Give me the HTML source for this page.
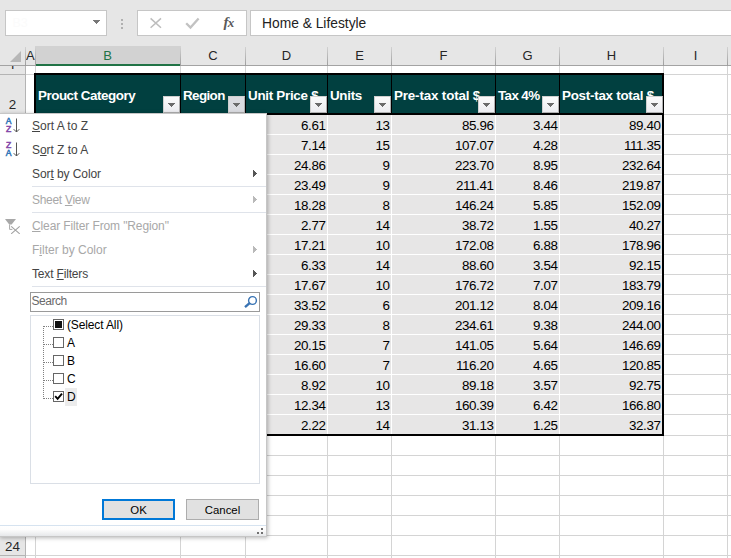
<!DOCTYPE html>
<html><head><meta charset="utf-8"><title>Sheet</title>
<style>
html,body{margin:0;padding:0;}
body{width:731px;height:558px;overflow:hidden;position:relative;background:#fff;font-family:"Liberation Sans",sans-serif;}
.abs{position:absolute;}
#top{left:0;top:0;width:731px;height:66px;background:#e6e6e6;}
.box{position:absolute;background:#fff;border:1px solid #c6c6c6;box-sizing:border-box;}
.ch{position:absolute;top:46px;height:19px;line-height:19px;text-align:center;font-size:13px;color:#262626;}
.vs{position:absolute;top:47px;width:1px;height:19px;background:linear-gradient(#d2d2d2,#9c9c9c);}
.gv{position:absolute;width:1px;background:#d4d4d4;top:66px;height:492px;}
.gh{position:absolute;height:1px;background:#d4d4d4;left:26px;width:705px;}
.rh{position:absolute;left:0;width:25px;background:#e6e6e6;text-align:center;font-size:13.4px;color:#262626;}
.hd{position:absolute;top:75px;height:38px;background:#014040;color:#fff;font-weight:bold;font-size:13.4px;letter-spacing:-0.45px;line-height:42px;white-space:nowrap;overflow:hidden;box-sizing:border-box;padding-left:2px;}
.fb{position:absolute;top:96px;width:17px;height:17px;box-sizing:border-box;background:linear-gradient(#fbfbfb,#ececf0);border:1px solid #b0b0b0;border-top-color:#cfcfcf;border-left-color:#cfcfcf;}
.fb i{position:absolute;left:4px;top:6px;width:0;height:0;border-left:3.5px solid transparent;border-right:3.5px solid transparent;border-top:4px solid #6b6b6b;}
.dc{position:absolute;height:19px;background:#e7e6e6;font-size:13.4px;line-height:21px;text-align:right;color:#000;box-sizing:border-box;padding-right:1.5px;letter-spacing:-0.4px;white-space:nowrap;}
#menu{position:absolute;left:-1px;top:113px;width:268px;height:424px;background:#fff;box-sizing:border-box;border:1px solid #c6c6c6;box-shadow:1px 1px 4px rgba(0,0,0,0.28);font-size:12px;color:#444;}
.mi{position:absolute;left:32px;height:24px;line-height:24px;white-space:nowrap;}
.mi.dis{color:#a8a8a8;}
.ms{position:absolute;left:32px;right:0;height:1px;background:#dfe3ea;}
.ar{position:absolute;left:254px;width:0;height:0;border-top:3.5px solid transparent;border-bottom:3.5px solid transparent;border-left:4px solid #555;}
.ar.dis{border-left-color:#b8b8b8;}
u{text-decoration:underline;text-underline-offset:1px;}
.cb{position:absolute;left:53px;width:11px;height:11px;box-sizing:border-box;border:1px solid #666;background:#fff;}
.cl{position:absolute;left:67px;height:18px;line-height:18px;color:#000;font-size:12px;}
.btn{position:absolute;top:385px;height:21px;width:73px;box-sizing:border-box;background:#e1e1e1;border:1px solid #adadad;text-align:center;line-height:20px;color:#000;font-size:11.4px;}
</style></head><body>

<div id="top" class="abs"></div>
<div class="box" style="left:5px;top:10px;width:102px;height:26px;"><span style="position:absolute;left:6.5px;top:5px;font-size:12.4px;color:#fbfbfb;">B3</span><svg width="7" height="4" viewBox="0 0 7 4" shape-rendering="crispEdges" style="position:absolute;left:87px;top:9px;"><path d="M0 0h7v1h-1v1h-1v1h-1v1h-1v-1h-1v-1h-1v-1h-1z" fill="#777"/></svg></div>
<div class="abs" style="left:121px;top:19px;width:2px;height:2px;background:#b0b0b0;"></div>
<div class="abs" style="left:121px;top:23px;width:2px;height:2px;background:#b0b0b0;"></div>
<div class="abs" style="left:121px;top:27px;width:2px;height:2px;background:#b0b0b0;"></div>
<div class="box" style="left:137px;top:10px;width:110px;height:26px;"><svg style="position:absolute;left:0;top:0" width="108" height="24" viewBox="0 0 108 24"><path d="M12.6 7.4 L23 16.8 M23 7.4 L12.6 16.8" stroke="#bdbdbd" stroke-width="1.5" fill="none"/><path d="M48.2 12.2 L52.5 16.6 L60.6 7.4" stroke="#c2c2c2" stroke-width="2.3" fill="none"/></svg><span style="position:absolute;left:85.5px;top:3px;font-family:'Liberation Serif',serif;font-style:italic;font-weight:bold;font-size:15px;color:#5a5a5a;letter-spacing:-0.8px;">f<span style="font-size:13px;">x</span></span></div>
<div class="box" style="left:250px;top:10px;width:490px;height:26px;border-right:none;"><span style="position:absolute;left:11px;top:5px;font-size:13.8px;color:#222;white-space:nowrap;">Home &amp; Lifestyle</span></div>
<div class="abs" style="left:0;top:65px;width:731px;height:1px;background:#a3a3a3;"></div>
<div class="abs" style="left:35px;top:46px;width:146px;height:18px;background:#d2d2d2;"></div>
<div class="abs" style="left:35px;top:64px;width:146px;height:2px;background:#217346;"></div>
<div class="ch" style="left:26px;width:8px;color:#262626;">A</div>
<div class="ch" style="left:35px;width:145px;color:#217346;">B</div>
<div class="ch" style="left:181px;width:64px;color:#262626;">C</div>
<div class="ch" style="left:246px;width:81px;color:#262626;">D</div>
<div class="ch" style="left:328px;width:63px;color:#262626;">E</div>
<div class="ch" style="left:392px;width:103px;color:#262626;">F</div>
<div class="ch" style="left:496px;width:63px;color:#262626;">G</div>
<div class="ch" style="left:560px;width:103px;color:#262626;">H</div>
<div class="ch" style="left:664px;width:63px;color:#262626;">I</div>
<div class="vs" style="left:25px;"></div>
<div class="vs" style="left:35px;"></div>
<div class="vs" style="left:180px;"></div>
<div class="vs" style="left:245px;"></div>
<div class="vs" style="left:327px;"></div>
<div class="vs" style="left:391px;"></div>
<div class="vs" style="left:495px;"></div>
<div class="vs" style="left:559px;"></div>
<div class="vs" style="left:663px;"></div>
<div class="vs" style="left:727px;"></div>
<svg class="abs" style="left:8px;top:50px" width="14" height="13"><path d="M13 1 L13 12 L2 12 Z" fill="#b7b7b7"/></svg>
<div class="gv" style="left:35px;"></div>
<div class="gv" style="left:180px;"></div>
<div class="gv" style="left:245px;"></div>
<div class="gv" style="left:327px;"></div>
<div class="gv" style="left:391px;"></div>
<div class="gv" style="left:495px;"></div>
<div class="gv" style="left:559px;"></div>
<div class="gv" style="left:663px;"></div>
<div class="gv" style="left:727px;"></div>
<div class="gh" style="top:74px;"></div>
<div class="gh" style="top:114px;"></div>
<div class="gh" style="top:134px;"></div>
<div class="gh" style="top:154px;"></div>
<div class="gh" style="top:174px;"></div>
<div class="gh" style="top:194px;"></div>
<div class="gh" style="top:214px;"></div>
<div class="gh" style="top:234px;"></div>
<div class="gh" style="top:254px;"></div>
<div class="gh" style="top:274px;"></div>
<div class="gh" style="top:294px;"></div>
<div class="gh" style="top:314px;"></div>
<div class="gh" style="top:334px;"></div>
<div class="gh" style="top:354px;"></div>
<div class="gh" style="top:374px;"></div>
<div class="gh" style="top:394px;"></div>
<div class="gh" style="top:414px;"></div>
<div class="gh" style="top:435px;"></div>
<div class="gh" style="top:455px;"></div>
<div class="gh" style="top:475px;"></div>
<div class="gh" style="top:495px;"></div>
<div class="gh" style="top:515px;"></div>
<div class="gh" style="top:535px;"></div>
<div class="gh" style="top:555px;"></div>
<div class="abs" style="left:0;top:66px;width:25px;height:492px;background:#e6e6e6;"></div>
<div class="abs" style="left:25px;top:66px;width:1px;height:492px;background:#b4b4b4;"></div>
<div class="abs" style="left:0;top:74px;width:25px;height:1px;background:#b4b4b4;"></div>
<div class="abs" style="left:0;top:114px;width:25px;height:1px;background:#b4b4b4;"></div>
<div class="abs" style="left:0;top:535px;width:25px;height:1px;background:#b4b4b4;"></div>
<div class="abs" style="left:0;top:555px;width:25px;height:1px;background:#b4b4b4;"></div>
<div class="rh" style="top:58px;height:16px;line-height:16px;overflow:hidden;clip-path:inset(8px 0 5px 0);">1</div>
<div class="rh" style="top:94px;height:20px;line-height:21px;">2</div>
<div class="rh" style="top:536px;height:19px;line-height:21px;">24</div>
<div class="abs" style="left:34px;top:73px;width:630px;height:363px;background:#000;"></div>
<div class="abs" style="left:36px;top:115px;width:626px;height:319px;background:#fff;"></div>
<div class="hd" style="left:36px;width:144px;letter-spacing:-0.47px;">Prouct Category</div>
<div class="fb" style="left:163px;background:linear-gradient(#fbfbfb,#ececf0);"><svg width="7" height="4" viewBox="0 0 7 4" shape-rendering="crispEdges" style="position:absolute;left:4px;top:6px;"><path d="M0 0h7v1h-1v1h-1v1h-1v1h-1v-1h-1v-1h-1v-1h-1z" fill="#6b6b6b"/></svg></div>
<div class="hd" style="left:181px;width:64px;letter-spacing:-0.61px;">Region</div>
<div class="fb" style="left:228px;background:#dadbe0;"><svg width="7" height="4" viewBox="0 0 7 4" shape-rendering="crispEdges" style="position:absolute;left:4px;top:6px;"><path d="M0 0h7v1h-1v1h-1v1h-1v1h-1v-1h-1v-1h-1v-1h-1z" fill="#6b6b6b"/></svg></div>
<div class="hd" style="left:246px;width:81px;letter-spacing:-0.28px;">Unit Price $</div>
<div class="fb" style="left:310px;background:linear-gradient(#fbfbfb,#ececf0);"><svg width="7" height="4" viewBox="0 0 7 4" shape-rendering="crispEdges" style="position:absolute;left:4px;top:6px;"><path d="M0 0h7v1h-1v1h-1v1h-1v1h-1v-1h-1v-1h-1v-1h-1z" fill="#6b6b6b"/></svg></div>
<div class="hd" style="left:328px;width:63px;letter-spacing:-0.3px;">Units</div>
<div class="fb" style="left:374px;background:linear-gradient(#fbfbfb,#ececf0);"><svg width="7" height="4" viewBox="0 0 7 4" shape-rendering="crispEdges" style="position:absolute;left:4px;top:6px;"><path d="M0 0h7v1h-1v1h-1v1h-1v1h-1v-1h-1v-1h-1v-1h-1z" fill="#6b6b6b"/></svg></div>
<div class="hd" style="left:392px;width:103px;letter-spacing:-0.16px;">Pre-tax total $</div>
<div class="fb" style="left:478px;background:linear-gradient(#fbfbfb,#ececf0);"><svg width="7" height="4" viewBox="0 0 7 4" shape-rendering="crispEdges" style="position:absolute;left:4px;top:6px;"><path d="M0 0h7v1h-1v1h-1v1h-1v1h-1v-1h-1v-1h-1v-1h-1z" fill="#6b6b6b"/></svg></div>
<div class="hd" style="left:496px;width:63px;letter-spacing:-0.62px;">Tax 4%</div>
<div class="fb" style="left:542px;background:linear-gradient(#fbfbfb,#ececf0);"><svg width="7" height="4" viewBox="0 0 7 4" shape-rendering="crispEdges" style="position:absolute;left:4px;top:6px;"><path d="M0 0h7v1h-1v1h-1v1h-1v1h-1v-1h-1v-1h-1v-1h-1z" fill="#6b6b6b"/></svg></div>
<div class="hd" style="left:560px;width:102px;letter-spacing:-0.26px;">Post-tax total $</div>
<div class="fb" style="left:646px;background:linear-gradient(#fbfbfb,#ececf0);"><svg width="7" height="4" viewBox="0 0 7 4" shape-rendering="crispEdges" style="position:absolute;left:4px;top:6px;"><path d="M0 0h7v1h-1v1h-1v1h-1v1h-1v-1h-1v-1h-1v-1h-1z" fill="#6b6b6b"/></svg></div>
<div class="dc" style="left:36px;top:115px;width:144px;"></div>
<div class="dc" style="left:181px;top:115px;width:64px;"></div>
<div class="dc" style="left:246px;top:115px;width:81px;">6.61</div>
<div class="dc" style="left:328px;top:115px;width:63px;">13</div>
<div class="dc" style="left:392px;top:115px;width:103px;">85.96</div>
<div class="dc" style="left:496px;top:115px;width:63px;">3.44</div>
<div class="dc" style="left:560px;top:115px;width:102px;">89.40</div>
<div class="dc" style="left:36px;top:135px;width:144px;"></div>
<div class="dc" style="left:181px;top:135px;width:64px;"></div>
<div class="dc" style="left:246px;top:135px;width:81px;">7.14</div>
<div class="dc" style="left:328px;top:135px;width:63px;">15</div>
<div class="dc" style="left:392px;top:135px;width:103px;">107.07</div>
<div class="dc" style="left:496px;top:135px;width:63px;">4.28</div>
<div class="dc" style="left:560px;top:135px;width:102px;">111.35</div>
<div class="dc" style="left:36px;top:155px;width:144px;"></div>
<div class="dc" style="left:181px;top:155px;width:64px;"></div>
<div class="dc" style="left:246px;top:155px;width:81px;">24.86</div>
<div class="dc" style="left:328px;top:155px;width:63px;">9</div>
<div class="dc" style="left:392px;top:155px;width:103px;">223.70</div>
<div class="dc" style="left:496px;top:155px;width:63px;">8.95</div>
<div class="dc" style="left:560px;top:155px;width:102px;">232.64</div>
<div class="dc" style="left:36px;top:175px;width:144px;"></div>
<div class="dc" style="left:181px;top:175px;width:64px;"></div>
<div class="dc" style="left:246px;top:175px;width:81px;">23.49</div>
<div class="dc" style="left:328px;top:175px;width:63px;">9</div>
<div class="dc" style="left:392px;top:175px;width:103px;">211.41</div>
<div class="dc" style="left:496px;top:175px;width:63px;">8.46</div>
<div class="dc" style="left:560px;top:175px;width:102px;">219.87</div>
<div class="dc" style="left:36px;top:195px;width:144px;"></div>
<div class="dc" style="left:181px;top:195px;width:64px;"></div>
<div class="dc" style="left:246px;top:195px;width:81px;">18.28</div>
<div class="dc" style="left:328px;top:195px;width:63px;">8</div>
<div class="dc" style="left:392px;top:195px;width:103px;">146.24</div>
<div class="dc" style="left:496px;top:195px;width:63px;">5.85</div>
<div class="dc" style="left:560px;top:195px;width:102px;">152.09</div>
<div class="dc" style="left:36px;top:215px;width:144px;"></div>
<div class="dc" style="left:181px;top:215px;width:64px;"></div>
<div class="dc" style="left:246px;top:215px;width:81px;">2.77</div>
<div class="dc" style="left:328px;top:215px;width:63px;">14</div>
<div class="dc" style="left:392px;top:215px;width:103px;">38.72</div>
<div class="dc" style="left:496px;top:215px;width:63px;">1.55</div>
<div class="dc" style="left:560px;top:215px;width:102px;">40.27</div>
<div class="dc" style="left:36px;top:235px;width:144px;"></div>
<div class="dc" style="left:181px;top:235px;width:64px;"></div>
<div class="dc" style="left:246px;top:235px;width:81px;">17.21</div>
<div class="dc" style="left:328px;top:235px;width:63px;">10</div>
<div class="dc" style="left:392px;top:235px;width:103px;">172.08</div>
<div class="dc" style="left:496px;top:235px;width:63px;">6.88</div>
<div class="dc" style="left:560px;top:235px;width:102px;">178.96</div>
<div class="dc" style="left:36px;top:255px;width:144px;"></div>
<div class="dc" style="left:181px;top:255px;width:64px;"></div>
<div class="dc" style="left:246px;top:255px;width:81px;">6.33</div>
<div class="dc" style="left:328px;top:255px;width:63px;">14</div>
<div class="dc" style="left:392px;top:255px;width:103px;">88.60</div>
<div class="dc" style="left:496px;top:255px;width:63px;">3.54</div>
<div class="dc" style="left:560px;top:255px;width:102px;">92.15</div>
<div class="dc" style="left:36px;top:275px;width:144px;"></div>
<div class="dc" style="left:181px;top:275px;width:64px;"></div>
<div class="dc" style="left:246px;top:275px;width:81px;">17.67</div>
<div class="dc" style="left:328px;top:275px;width:63px;">10</div>
<div class="dc" style="left:392px;top:275px;width:103px;">176.72</div>
<div class="dc" style="left:496px;top:275px;width:63px;">7.07</div>
<div class="dc" style="left:560px;top:275px;width:102px;">183.79</div>
<div class="dc" style="left:36px;top:295px;width:144px;"></div>
<div class="dc" style="left:181px;top:295px;width:64px;"></div>
<div class="dc" style="left:246px;top:295px;width:81px;">33.52</div>
<div class="dc" style="left:328px;top:295px;width:63px;">6</div>
<div class="dc" style="left:392px;top:295px;width:103px;">201.12</div>
<div class="dc" style="left:496px;top:295px;width:63px;">8.04</div>
<div class="dc" style="left:560px;top:295px;width:102px;">209.16</div>
<div class="dc" style="left:36px;top:315px;width:144px;"></div>
<div class="dc" style="left:181px;top:315px;width:64px;"></div>
<div class="dc" style="left:246px;top:315px;width:81px;">29.33</div>
<div class="dc" style="left:328px;top:315px;width:63px;">8</div>
<div class="dc" style="left:392px;top:315px;width:103px;">234.61</div>
<div class="dc" style="left:496px;top:315px;width:63px;">9.38</div>
<div class="dc" style="left:560px;top:315px;width:102px;">244.00</div>
<div class="dc" style="left:36px;top:335px;width:144px;"></div>
<div class="dc" style="left:181px;top:335px;width:64px;"></div>
<div class="dc" style="left:246px;top:335px;width:81px;">20.15</div>
<div class="dc" style="left:328px;top:335px;width:63px;">7</div>
<div class="dc" style="left:392px;top:335px;width:103px;">141.05</div>
<div class="dc" style="left:496px;top:335px;width:63px;">5.64</div>
<div class="dc" style="left:560px;top:335px;width:102px;">146.69</div>
<div class="dc" style="left:36px;top:355px;width:144px;"></div>
<div class="dc" style="left:181px;top:355px;width:64px;"></div>
<div class="dc" style="left:246px;top:355px;width:81px;">16.60</div>
<div class="dc" style="left:328px;top:355px;width:63px;">7</div>
<div class="dc" style="left:392px;top:355px;width:103px;">116.20</div>
<div class="dc" style="left:496px;top:355px;width:63px;">4.65</div>
<div class="dc" style="left:560px;top:355px;width:102px;">120.85</div>
<div class="dc" style="left:36px;top:375px;width:144px;"></div>
<div class="dc" style="left:181px;top:375px;width:64px;"></div>
<div class="dc" style="left:246px;top:375px;width:81px;">8.92</div>
<div class="dc" style="left:328px;top:375px;width:63px;">10</div>
<div class="dc" style="left:392px;top:375px;width:103px;">89.18</div>
<div class="dc" style="left:496px;top:375px;width:63px;">3.57</div>
<div class="dc" style="left:560px;top:375px;width:102px;">92.75</div>
<div class="dc" style="left:36px;top:395px;width:144px;"></div>
<div class="dc" style="left:181px;top:395px;width:64px;"></div>
<div class="dc" style="left:246px;top:395px;width:81px;">12.34</div>
<div class="dc" style="left:328px;top:395px;width:63px;">13</div>
<div class="dc" style="left:392px;top:395px;width:103px;">160.39</div>
<div class="dc" style="left:496px;top:395px;width:63px;">6.42</div>
<div class="dc" style="left:560px;top:395px;width:102px;">166.80</div>
<div class="dc" style="left:36px;top:415px;width:144px;"></div>
<div class="dc" style="left:181px;top:415px;width:64px;"></div>
<div class="dc" style="left:246px;top:415px;width:81px;">2.22</div>
<div class="dc" style="left:328px;top:415px;width:63px;">14</div>
<div class="dc" style="left:392px;top:415px;width:103px;">31.13</div>
<div class="dc" style="left:496px;top:415px;width:63px;">1.25</div>
<div class="dc" style="left:560px;top:415px;width:102px;">32.37</div>
<div id="menu">
<div class="mi" style="top:0px;letter-spacing:0px;"><u>S</u>ort A to Z</div>
<div class="mi" style="top:24px;letter-spacing:-0.05px;">S<u>o</u>rt Z to A</div>
<div class="mi" style="top:48px;letter-spacing:-0.08px;">Sor<u>t</u> by Color</div>
<svg width="4" height="7" viewBox="0 0 4 7" shape-rendering="crispEdges" style="position:absolute;left:253px;top:56px;"><path d="M0 0h1v1h1v1h1v1h1v1h-1v1h-1v1h-1v1h-1z" fill="#555"/></svg>
<div class="ms" style="top:72px;"></div>
<div class="mi dis" style="top:74px;letter-spacing:-0.3px;">Sheet <u>V</u>iew</div>
<svg width="4" height="7" viewBox="0 0 4 7" shape-rendering="crispEdges" style="position:absolute;left:253px;top:82px;"><path d="M0 0h1v1h1v1h1v1h1v1h-1v1h-1v1h-1v1h-1z" fill="#b9b9b9"/></svg>
<div class="ms" style="top:98px;"></div>
<div class="mi dis" style="top:100px;letter-spacing:-0.12px;"><u>C</u>lear Filter From "Region"</div>
<div class="mi dis" style="top:124px;letter-spacing:0px;">F<u>i</u>lter by Color</div>
<svg width="4" height="7" viewBox="0 0 4 7" shape-rendering="crispEdges" style="position:absolute;left:253px;top:132px;"><path d="M0 0h1v1h1v1h1v1h1v1h-1v1h-1v1h-1v1h-1z" fill="#b9b9b9"/></svg>
<div class="mi" style="top:148px;letter-spacing:-0.17px;">Text <u>F</u>ilters</div>
<svg width="4" height="7" viewBox="0 0 4 7" shape-rendering="crispEdges" style="position:absolute;left:253px;top:156px;"><path d="M0 0h1v1h1v1h1v1h1v1h-1v1h-1v1h-1v1h-1z" fill="#555"/></svg>
<div class="ms" style="top:172px;"></div>
<svg class="abs" style="left:5px;top:3px" width="18" height="42" viewBox="0 0 18 42"><text x="0.8" y="7.3" font-family="Liberation Sans,sans-serif" font-size="8.6" fill="#3576b8" stroke="#3576b8" stroke-width="0.5">A</text><text x="1.0" y="15.3" font-family="Liberation Sans,sans-serif" font-size="8.6" fill="#8346a8" stroke="#8346a8" stroke-width="0.5">Z</text><path d="M11.5 1.5 V15 M8.7 12.2 L11.5 15 L14.3 12.2" stroke="#555" stroke-width="1" fill="none"/><text x="1.0" y="30.7" font-family="Liberation Sans,sans-serif" font-size="8.6" fill="#8346a8" stroke="#8346a8" stroke-width="0.5">Z</text><text x="0.8" y="39.3" font-family="Liberation Sans,sans-serif" font-size="8.6" fill="#3576b8" stroke="#3576b8" stroke-width="0.5">A</text><path d="M11.5 25.5 V39 M8.7 36.2 L11.5 39 L14.3 36.2" stroke="#555" stroke-width="1" fill="none"/></svg>
<svg class="abs" style="left:4px;top:104px" width="18" height="16" viewBox="0 0 18 16"><path d="M1 1 H12 L7.6 6.6 H5.2 Z" fill="#a8a8a8"/><path d="M5.6 6.5 V11.4 H8.4" stroke="#a8a8a8" stroke-width="1" fill="none"/><path d="M7.2 8.4 L15.7 15.8 M15.7 8.4 L7.2 15.8" stroke="#a0a0a0" stroke-width="1.1" fill="none"/></svg>
<div class="abs" style="left:30px;top:178px;width:230px;height:20px;box-sizing:border-box;border:1px solid #9a9a9a;background:#fff;"><span style="position:absolute;left:0.5px;top:0px;line-height:16px;color:#6a6a6a;font-size:12px;letter-spacing:-0.45px;">Search</span><svg style="position:absolute;left:211px;top:1px" width="17" height="17" viewBox="0 0 17 17"><circle cx="10.5" cy="6.5" r="3.9" stroke="#3873b3" stroke-width="1.4" fill="none"/><path d="M7.6 9.2 L3.0 13.1" stroke="#3873b3" stroke-width="2.4"/></svg></div>
<div class="abs" style="left:30px;top:201px;width:230px;height:169px;box-sizing:border-box;border:1px solid #dadfe6;background:#fff;"></div>
<div class="abs" style="left:43px;top:212px;width:0;height:73px;border-left:1px dotted #808080;"></div>
<div class="abs" style="left:44px;top:212px;width:9px;height:0;border-top:1px dotted #808080;"></div>
<div class="cb" style="top:205px;"><div style="position:absolute;left:1px;top:1px;width:7px;height:7px;background:#111;"></div></div>
<div class="cl" style="top:202px;letter-spacing:-0.13px;">(Select All)</div>
<div class="abs" style="left:44px;top:230px;width:9px;height:0;border-top:1px dotted #808080;"></div>
<div class="cb" style="top:223px;"></div>
<div class="cl" style="top:220px;">A</div>
<div class="abs" style="left:44px;top:248px;width:9px;height:0;border-top:1px dotted #808080;"></div>
<div class="cb" style="top:241px;"></div>
<div class="cl" style="top:238px;">B</div>
<div class="abs" style="left:44px;top:266px;width:9px;height:0;border-top:1px dotted #808080;"></div>
<div class="cb" style="top:259px;"></div>
<div class="cl" style="top:256px;">C</div>
<div class="abs" style="left:44px;top:284px;width:9px;height:0;border-top:1px dotted #808080;"></div>
<div class="abs" style="left:65px;top:274px;width:12px;height:18px;background:#ececec;"></div>
<div class="cb" style="top:277px;"><svg style="position:absolute;left:0;top:0" width="9" height="9" viewBox="0 0 9 9"><path d="M1.2 4.2 L3.6 6.8 L8 1.6" stroke="#000" stroke-width="1.9" fill="none"/></svg></div>
<div class="cl" style="top:274px;">D</div>
<div class="btn" style="left:102px;border:2px solid #0078d7;line-height:18px;">OK</div>
<div class="btn" style="left:186px;">Cancel</div>
<div class="abs" style="left:0;right:0;top:411px;height:1px;background:#d6e3f0;"></div>
<div class="abs" style="left:0;right:0;top:412px;height:10px;background:linear-gradient(#fff 0%,#fdfdfd 35%,#e6e8ea 100%);"></div>
<div class="abs" style="left:261px;top:414px;width:2px;height:2px;background:#707070;"></div>
<div class="abs" style="left:257px;top:418px;width:2px;height:2px;background:#707070;"></div>
<div class="abs" style="left:261px;top:418px;width:2px;height:2px;background:#707070;"></div>
</div>
</body></html>
